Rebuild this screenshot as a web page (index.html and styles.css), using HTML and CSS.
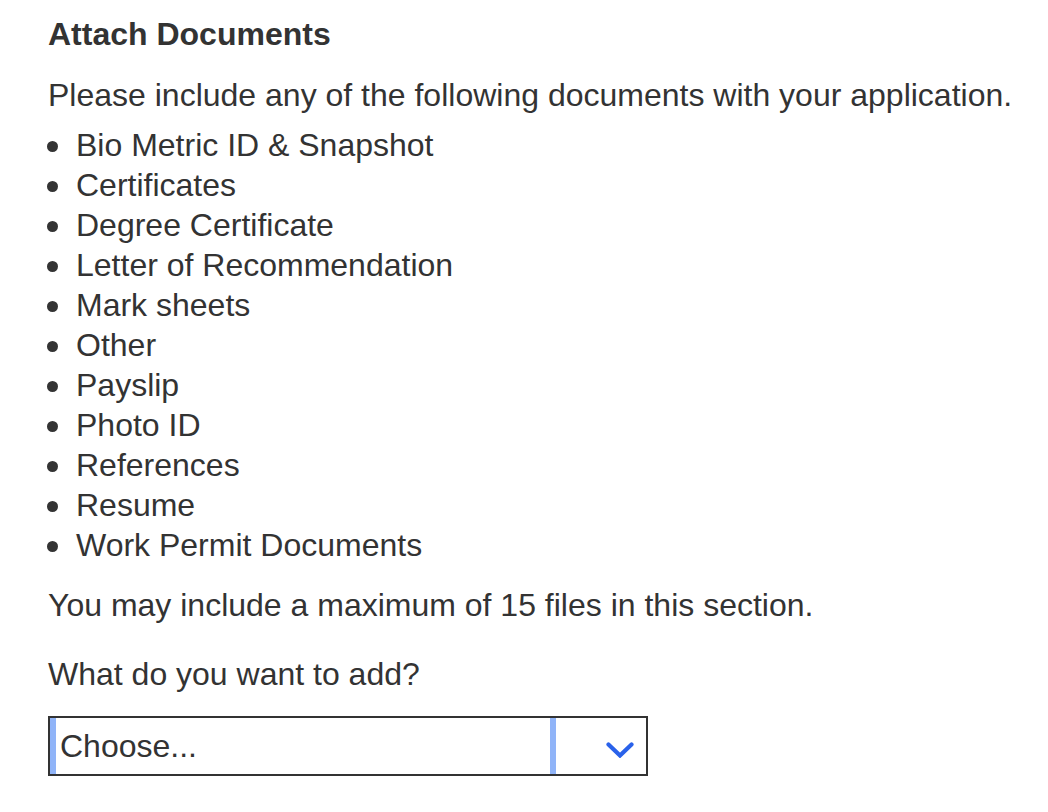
FILE: index.html
```html
<!DOCTYPE html>
<html lang="en">
<head>
<meta charset="utf-8">
<title>Attach Documents</title>
<link rel="stylesheet" href="styles.css">
</head>
<body>
<section class="attach">
  <h2 class="attach-title">Attach Documents</h2>
  <p class="intro">Please include any of the following documents with your application.</p>
  <ul class="doc-list">
    <li>Bio Metric ID &amp; Snapshot</li>
    <li>Certificates</li>
    <li>Degree Certificate</li>
    <li>Letter of Recommendation</li>
    <li>Mark sheets</li>
    <li>Other</li>
    <li>Payslip</li>
    <li>Photo ID</li>
    <li>References</li>
    <li>Resume</li>
    <li>Work Permit Documents</li>
  </ul>
  <p class="limit">You may include a maximum of 15 files in this section.</p>
  <label class="add-label" for="doc-type">What do you want to add?</label>
  <div class="select" id="doc-type" role="combobox" aria-expanded="false">
    <span class="select-value">Choose...</span>
    <span class="select-arrow">
      <svg width="28" height="16" viewBox="0 0 28 16" aria-hidden="true"><path d="M2.5 2.5 L14 13.5 L25.5 2.5" fill="none" stroke="#2a62ea" stroke-width="4.2" stroke-linecap="round" stroke-linejoin="miter"/></svg>
    </span>
  </div>
</section>
</body>
</html>
```

FILE: styles.css
```css
html, body {
  margin: 0;
  padding: 0;
  background: #ffffff;
}

body {
  font-family: "Liberation Sans", Arial, sans-serif;
  font-size: 32px;
  line-height: 40px;
  color: #333333;
}

.attach {
  padding: 14px 16px 20px 48px;
}

.attach-title {
  margin: 0 0 21px 0;
  font-size: 32px;
  font-weight: bold;
  line-height: 40px;
}

.intro {
  margin: 0 0 10px 0;
  white-space: nowrap;
}

.doc-list {
  list-style: none;
  margin: 0 0 20px 0;
  padding: 0;
}

.doc-list li {
  display: flex;
  align-items: center;
}

.doc-list li::before {
  content: "";
  flex: none;
  width: 11px;
  height: 11px;
  border-radius: 50%;
  background: #333333;
  margin: 2px 18px 0 -1px;
}

.limit {
  margin: 0 0 29px 0;
}

.add-label {
  display: block;
  margin: 0 0 22px 0;
}

.select {
  display: flex;
  width: 596px;
  height: 56px;
  border: 2px solid #333333;
  background: #ffffff;
}

.select-value {
  flex: 1;
  border-left: 6px solid #90b4f8;
  border-right: 6px solid #90b4f8;
  padding-left: 4px;
  line-height: 56px;
  color: #333333;
}

.select-arrow {
  width: 90px;
  display: flex;
  align-items: center;
  justify-content: flex-end;
  padding-right: 12px;
  box-sizing: border-box;
  padding-top: 7px;
}

.select-arrow svg {
  display: block;
}
```
